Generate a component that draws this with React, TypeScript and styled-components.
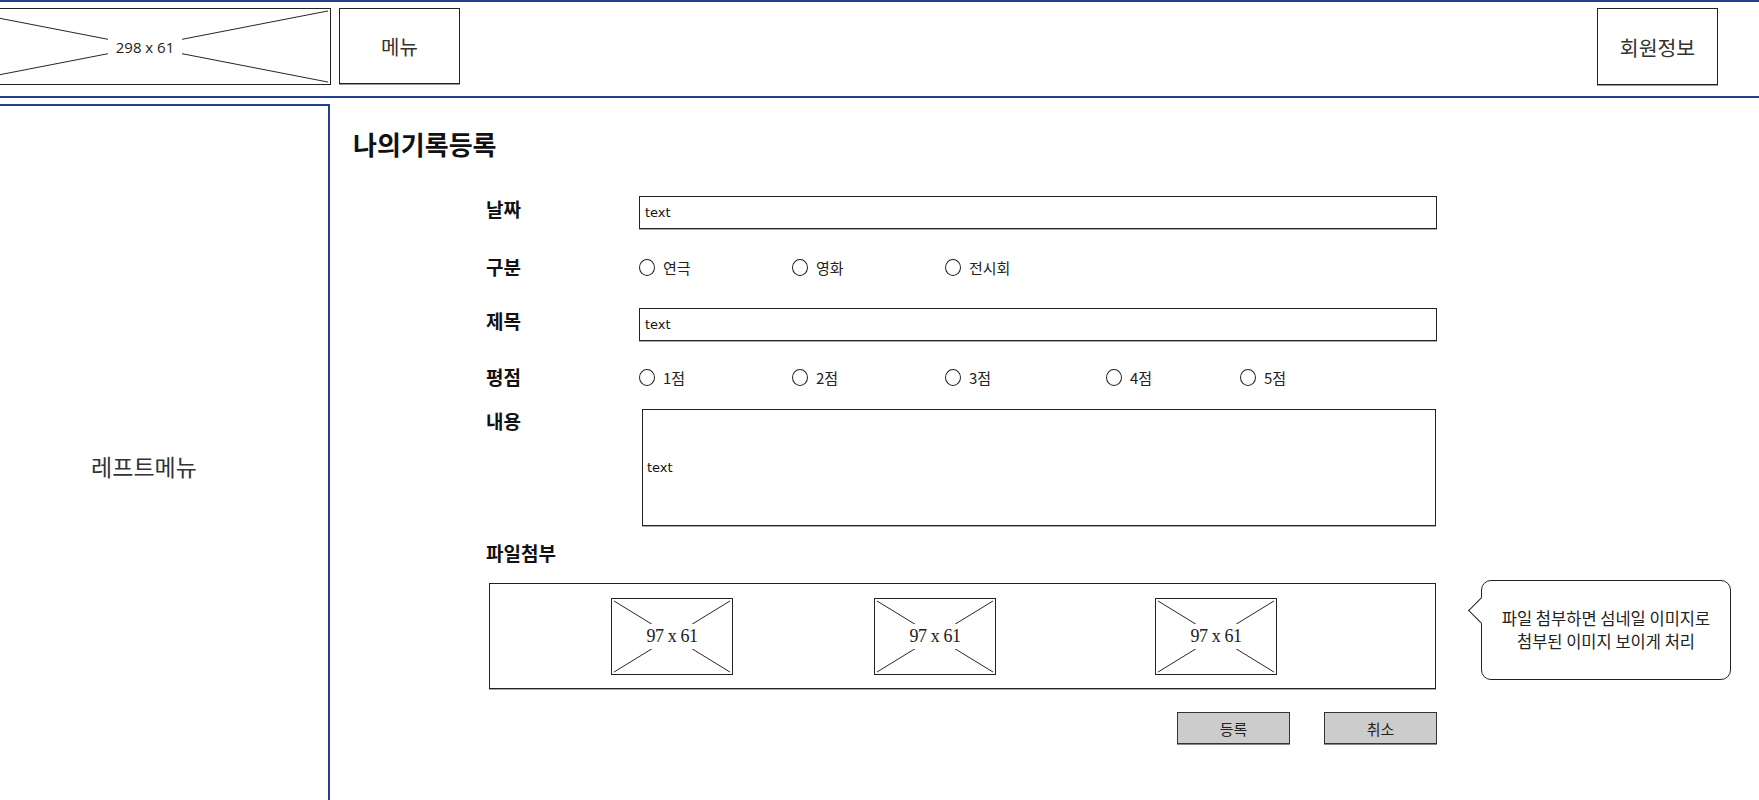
import React from 'react';
import styled, { createGlobalStyle } from 'styled-components';

const BLUE = '#243f8f';

const GlobalStyle = createGlobalStyle`
  html, body { margin: 0; padding: 0; background: #fff; }
  body {
    font-family: "Noto Sans CJK KR", "Noto Sans", sans-serif;
    color: #111;
    overflow: hidden;
  }
  * { box-sizing: border-box; }
`;

const Page = styled.div`
  width: 1759px;
  height: 800px;
  overflow: hidden;
  display: flex;
  flex-direction: column;
`;

const Header = styled.header`
  height: 98px;
  flex: none;
  border-top: 2px solid ${BLUE};
  border-bottom: 2px solid ${BLUE};
  display: flex;
  align-items: flex-start;
  padding: 6px 41px 0 0;
`;

const Placeholder = styled.div<{ $w: number; $h: number }>`
  position: relative;
  width: ${(p) => p.$w}px;
  height: ${(p) => p.$h}px;
  border: 1px solid #222;
  display: flex;
  align-items: center;
  justify-content: center;
  background: #fff;
  flex: none;
`;

const XLines = styled.svg`
  position: absolute;
  inset: 0;
  width: 100%;
  height: 100%;
`;

const LogoLabel = styled.span`
  position: relative;
  background: #fff;
  padding: 0 8px;
  font-family: "Open Sans", "Liberation Sans", sans-serif;
  font-size: 15px;
  color: #222;
`;

const ThumbLabel = styled.span`
  position: relative;
  background: #fff;
  padding: 2px 3px;
  font-family: "Liberation Serif", serif;
  font-size: 18px;
  letter-spacing: -0.4px;
  color: #222;
`;

const NavBox = styled.div<{ $ml?: string; $h: number; $fs: number }>`
  width: 121px;
  height: ${(p) => p.$h}px;
  margin-left: ${(p) => p.$ml ?? '0'};
  border: 1px solid #222;
  box-shadow: 0 1px 0 #999;
  display: flex;
  align-items: center;
  justify-content: center;
  font-size: ${(p) => p.$fs}px;
  color: #333;
  flex: none;
`;

const Main = styled.div`
  display: flex;
  margin-top: 6px;
  flex: 1;
  min-height: 0;
`;

const Sidebar = styled.aside`
  width: 372px;
  height: 724px;
  margin-left: -42px;
  border: 2px solid ${BLUE};
  display: flex;
  align-items: center;
  justify-content: center;
  font-size: 23px;
  color: #333;
  flex: none;
`;

const Content = styled.section`
  flex: 1;
  padding: 25px 0 0 23px;
`;

const Title = styled.h1`
  margin: 0;
  font-size: 26px;
  line-height: 30px;
  font-weight: 700;
  color: #111;
`;

const Form = styled.div`
  margin: 37px 0 0 133px;
  width: 951px;
  display: flex;
  flex-direction: column;
`;

const Row = styled.div<{ $mt: number }>`
  display: flex;
  align-items: flex-start;
  margin-top: ${(p) => p.$mt}px;
`;

const Label = styled.div`
  width: 153px;
  flex: none;
  font-size: 19px;
  line-height: 26px;
  font-weight: 700;
  color: #111;
`;

const SketchText = styled.span`
  font-family: "DejaVu Sans", "Liberation Sans", sans-serif;
  font-size: 13px;
  color: #111;
`;

const TextInput = styled.div`
  width: 798px;
  height: 33px;
  border: 1px solid #222;
  box-shadow: 0 1px 0 #aaa;
  display: flex;
  align-items: center;
  padding-left: 5px;
`;

const TextArea = styled.div`
  width: 794px;
  height: 117px;
  margin: 1px 0 0 3px;
  border: 1px solid #222;
  box-shadow: 0 1px 0 #aaa;
  display: flex;
  align-items: center;
  padding-left: 4px;
`;

const RadioGroup = styled.div`
  display: flex;
  align-items: center;
  height: 26px;
`;

const RadioItem = styled.label<{ $w: number }>`
  width: ${(p) => p.$w}px;
  display: flex;
  align-items: center;
  gap: 8px;
  font-size: 15px;
  color: #222;
  flex: none;
`;

const Circle = styled.span`
  width: 16px;
  height: 17px;
  border: 1.5px solid #222;
  border-radius: 50%;
  flex: none;
`;

const FileRow = styled.div`
  display: flex;
  align-items: flex-start;
  margin: 17px 0 0 3px;
`;

const FileBox = styled.div`
  width: 947px;
  height: 106px;
  border: 1px solid #222;
  box-shadow: 0 1px 0 #aaa;
  display: flex;
  align-items: center;
  flex: none;
`;

const ThumbSlot = styled.div<{ $ml: number }>`
  margin-left: ${(p) => p.$ml}px;
  flex: none;
`;

const Callout = styled.div`
  position: relative;
  margin: -3px 0 0 45px;
  width: 250px;
  height: 100px;
  border: 1px solid #222;
  border-radius: 10px;
  display: flex;
  align-items: center;
  justify-content: center;
  text-align: center;
  font-size: 16.5px;
  line-height: 23px;
  color: #222;
  flex: none;
  background: #fff;

  &::before {
    content: '';
    position: absolute;
    left: -10px;
    top: 20px;
    width: 18px;
    height: 18px;
    background: #fff;
    border-left: 1px solid #222;
    border-bottom: 1px solid #222;
    transform: rotate(45deg);
  }
`;

const CalloutText = styled.div`
  position: relative;
`;

const Buttons = styled.div`
  display: flex;
  justify-content: flex-end;
  gap: 34px;
  margin-top: 23px;
`;

const Button = styled.button`
  width: 113px;
  height: 32px;
  background: #cccccc;
  border: 1px solid #333;
  box-shadow: 0 1px 0 #888;
  font-family: "Noto Sans CJK KR", sans-serif;
  font-size: 15px;
  color: #222;
  padding: 0;
`;

function XBox({ w, h, children, ml }: { w: number; h: number; children: React.ReactNode; ml?: number }) {
  return (
    <Placeholder $w={w} $h={h} style={ml !== undefined ? { marginLeft: ml } : undefined}>
      <XLines viewBox={`0 0 ${w} ${h}`} preserveAspectRatio="none">
        <line x1="2" y1="2" x2={w - 2} y2={h - 2} stroke="#222" strokeWidth="1" />
        <line x1="2" y1={h - 2} x2={w - 2} y2="2" stroke="#222" strokeWidth="1" />
      </XLines>
      {children}
    </Placeholder>
  );
}

const categories = [
  { label: '연극', w: 153 },
  { label: '영화', w: 153 },
  { label: '전시회', w: 153 },
];

const scores = [
  { label: '1점', w: 153 },
  { label: '2점', w: 153 },
  { label: '3점', w: 161 },
  { label: '4점', w: 134 },
  { label: '5점', w: 100 },
];

const thumbs = [121, 141, 159];

export default function App() {
  return (
    <>
      <GlobalStyle />
      <Page>
        <Header>
          <XBox w={372} h={77} ml={-41}>
            <LogoLabel>298 x 61</LogoLabel>
          </XBox>
          <NavBox $ml="8px" $h={76} $fs={20}>메뉴</NavBox>
          <NavBox $ml="auto" $h={77} $fs={20.5}>회원정보</NavBox>
        </Header>
        <Main>
          <Sidebar>레프트메뉴</Sidebar>
          <Content>
            <Title>나의기록등록</Title>
            <Form>
              <Row $mt={0}>
                <Label>날짜</Label>
                <TextInput>
                  <SketchText>text</SketchText>
                </TextInput>
              </Row>
              <Row $mt={25}>
                <Label>구분</Label>
                <RadioGroup>
                  {categories.map((c) => (
                    <RadioItem key={c.label} $w={c.w}>
                      <Circle />
                      {c.label}
                    </RadioItem>
                  ))}
                </RadioGroup>
              </Row>
              <Row $mt={28}>
                <Label>제목</Label>
                <TextInput>
                  <SketchText>text</SketchText>
                </TextInput>
              </Row>
              <Row $mt={23}>
                <Label>평점</Label>
                <RadioGroup>
                  {scores.map((s) => (
                    <RadioItem key={s.label} $w={s.w}>
                      <Circle />
                      {s.label}
                    </RadioItem>
                  ))}
                </RadioGroup>
              </Row>
              <Row $mt={18}>
                <Label>내용</Label>
                <TextArea>
                  <SketchText>text</SketchText>
                </TextArea>
              </Row>
              <Row $mt={14}>
                <Label>파일첨부</Label>
              </Row>
              <FileRow>
                <FileBox>
                  {thumbs.map((ml, i) => (
                    <ThumbSlot key={i} $ml={ml}>
                      <XBox w={122} h={77}>
                        <ThumbLabel>97 x 61</ThumbLabel>
                      </XBox>
                    </ThumbSlot>
                  ))}
                </FileBox>
                <Callout>
                  <CalloutText>
                    파일 첨부하면 섬네일 이미지로
                    <br />
                    첨부된 이미지 보이게 처리
                  </CalloutText>
                </Callout>
              </FileRow>
              <Buttons>
                <Button>등록</Button>
                <Button>취소</Button>
              </Buttons>
            </Form>
          </Content>
        </Main>
      </Page>
    </>
  );
}
